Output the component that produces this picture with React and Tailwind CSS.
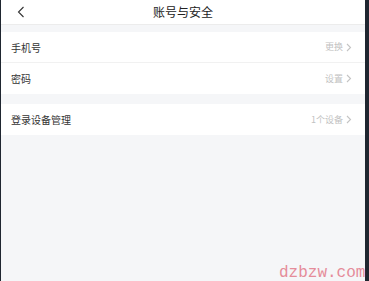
import React from 'react';

const font = { fontFamily: '"Noto Sans CJK SC", "Noto Sans", sans-serif' };

const Chevron = () => (
  <svg width="6" height="9" viewBox="0 0 6 9" className="ml-[3px]">
    <path d="M1 1l3.5 3.5L1 8" fill="none" stroke="#c4c4c4" strokeWidth="1.1" />
  </svg>
);

const Row = ({ label, value, divider }) => (
  <div className={`flex h-[31px] items-center justify-between bg-white pl-[10px] pr-[13px] ${divider ? 'border-b border-[#f1f1f1]' : ''}`}>
    <span className="text-[10px] text-[#333]">{label}</span>
    <span className="flex items-center text-[9px] text-[#c2c2c2]">
      {value}
      <Chevron />
    </span>
  </div>
);

export default function App() {
  return (
    <div className="flex h-[281px] w-[369px] overflow-hidden bg-[#1f2630]" style={font}>
      <div className="relative ml-px flex w-[364px] flex-col bg-[#f5f6f8]">
        <div className="relative flex h-[25px] items-center justify-center border-b border-[#ececec] bg-white">
          <svg width="8" height="12" viewBox="0 0 8 12" className="absolute left-[16px] top-[6px]">
            <path d="M6.5 1L1.5 6l5 5" fill="none" stroke="#333" strokeWidth="1.1" />
          </svg>
          <span className="text-[12px] text-[#222]">账号与安全</span>
        </div>
        <div className="mt-[7px]">
          <Row label="手机号" value="更换" divider />
          <Row label="密码" value="设置" />
        </div>
        <div className="mt-[10px]">
          <Row label="登录设备管理" value="1个设备" />
        </div>
        <span
          className="absolute left-[278px] top-[261px] whitespace-nowrap text-[16px] text-[#e58c9a]"
          style={{ fontFamily: '"Liberation Mono", monospace' }}
        >
          dzbzw.com
        </span>
      </div>
    </div>
  );
}
